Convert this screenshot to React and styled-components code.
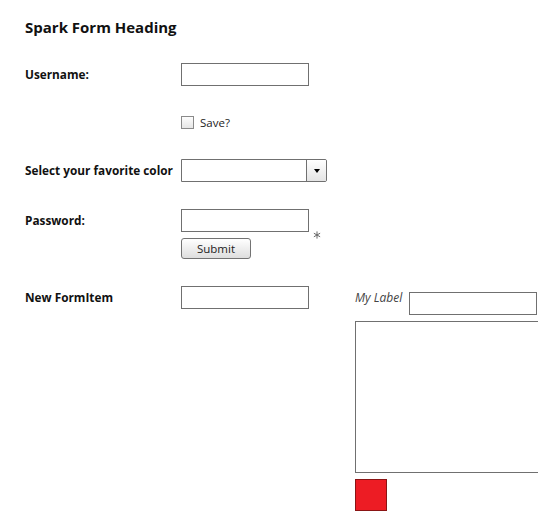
import React from 'react'
import styled, { createGlobalStyle } from 'styled-components'

const GlobalStyle = createGlobalStyle`
    html, body {
        margin: 0;
        padding: 0;
        overflow: hidden;
        background: #fff;
    }
    body {
        font-family: "Open Sans", "DejaVu Sans", sans-serif;
        color: #000;
    }
`;

const App = () => {
    return (
        <Page>
            <GlobalStyle />
            <Heading>Spark Form Heading</Heading>
            <Form>
                <Row>
                    <Label>Username:</Label>
                    <Content>
                        <TextInput />
                    </Content>
                </Row>
                <Row short>
                    <Label />
                    <Content>
                        <CheckRow>
                            <CheckBox />
                            <span>Save?</span>
                        </CheckRow>
                    </Content>
                </Row>
                <Row>
                    <Label>Select your favorite color</Label>
                    <Content>
                        <Combo>
                            <ComboField />
                            <ComboButton>
                                <Arrow />
                            </ComboButton>
                        </Combo>
                    </Content>
                </Row>
                <Row>
                    <Label>Password:</Label>
                    <Content>
                        <TextInput />
                        <Button>Submit</Button>
                    </Content>
                    <Required>
                        <svg width="8" height="8" viewBox="0 0 8 8">
                            <g stroke="#666" strokeWidth="1" strokeLinecap="round">
                                <line x1="4" y1="0.8" x2="4" y2="7.2" />
                                <line x1="1.2" y1="2.4" x2="6.8" y2="5.6" />
                                <line x1="1.2" y1="5.6" x2="6.8" y2="2.4" />
                            </g>
                        </svg>
                    </Required>
                </Row>
                <Row>
                    <Label>New FormItem</Label>
                    <Content>
                        <TextInput />
                    </Content>
                    <Side>
                        <SideLine>
                            <SideLabel>My Label</SideLabel>
                            <TextInput />
                        </SideLine>
                        <TextArea />
                        <Swatch />
                    </Side>
                </Row>
            </Form>
        </Page>
    )
}

export default App

const Page = styled.div`
    box-sizing: border-box;
    width: 538px;
    height: 532px;
    overflow: hidden;
    padding: 17px 0 0 25px;
`;
const Heading = styled.h1`
    margin: 0;
    font-size: 15px;
    line-height: 20px;
    font-weight: 700;
    color: #111;
`;
const Form = styled.div`
    display: flex;
    flex-direction: column;
    gap: 27px;
    margin-top: 26px;
`;
const Row = styled.div`
    display: flex;
    align-items: flex-start;
    min-height: ${p => p.short ? '19px' : '23px'};
`;
const Label = styled.div`
    width: 156px;
    flex-shrink: 0;
    font-size: 11.8px;
    font-weight: 700;
    line-height: 22px;
    white-space: nowrap;
    color: #111;
`;
const Content = styled.div`
    display: flex;
    flex-direction: column;
    align-items: flex-start;
    justify-content: center;
    gap: 6px;
    min-height: inherit;
`;
const TextInput = styled.div`
    box-sizing: border-box;
    width: 128px;
    height: 23px;
    border: 1px solid #707070;
    background: #fff;
    flex-shrink: 0;
`;
const CheckRow = styled.div`
    display: flex;
    align-items: center;
    gap: 6px;
    font-size: 11.5px;
    color: #222;
`;
const CheckBox = styled.span`
    box-sizing: border-box;
    width: 13px;
    height: 13px;
    border: 1px solid #8a8a8a;
    background: linear-gradient(#fdfdfd, #e6e6e6);
`;
const Combo = styled.div`
    display: flex;
    box-sizing: border-box;
    width: 146px;
    height: 23px;
    border: 1px solid #707070;
    border-radius: 0 2px 2px 0;
    overflow: hidden;
`;
const ComboField = styled.div`
    flex: 1;
    background: #fff;
    border-right: 1px solid #707070;
`;
const ComboButton = styled.div`
    width: 19px;
    display: flex;
    align-items: center;
    justify-content: center;
    background: linear-gradient(#ffffff, #e4e4e4);
`;
const Arrow = styled.span`
    width: 0;
    height: 0;
    border-left: 3.5px solid transparent;
    border-right: 3.5px solid transparent;
    border-top: 4px solid #000;
    margin-top: 1px;
`;
const Button = styled.div`
    box-sizing: border-box;
    width: 70px;
    height: 21px;
    border: 1px solid #737373;
    border-radius: 3px;
    background: linear-gradient(#ffffff, #dedede);
    font-size: 11.5px;
    color: #222;
    display: flex;
    align-items: center;
    justify-content: center;
`;
const Required = styled.div`
    align-self: center;
    margin-left: 4px;
    display: flex;
    margin-top: 1px;
`;
const Side = styled.div`
    display: flex;
    flex-direction: column;
    gap: 6px;
    margin-left: 46px;
    margin-top: 6px;
`;
const SideLine = styled.div`
    display: flex;
    align-items: flex-start;
    gap: 7px;
`;
const SideLabel = styled.span`
    font-size: 12px;
    font-style: italic;
    color: #444;
    line-height: 12px;
`;
const TextArea = styled.div`
    box-sizing: border-box;
    width: 220px;
    height: 152px;
    border: 1px solid #707070;
    background: #fff;
`;
const Swatch = styled.div`
    box-sizing: border-box;
    width: 32px;
    height: 32px;
    background: #ed1c24;
    border: 1px solid #8a1515;
`;
